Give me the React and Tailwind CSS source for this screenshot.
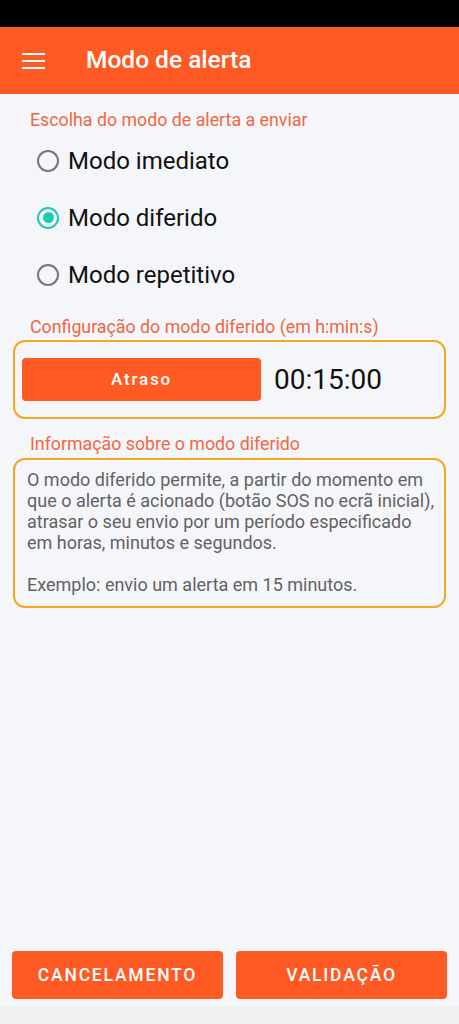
import { useState } from 'react';

const modes = ['Modo imediato', 'Modo diferido', 'Modo repetitivo'];

export default function App() {
  const [mode, setMode] = useState(1);

  return (
    <div className="w-[459px] h-[1024px] flex flex-col bg-[#f5f6fa] font-['Roboto',sans-serif] overflow-hidden">
      {/* status bar */}
      <div className="h-[27px] bg-black shrink-0" />

      {/* app bar */}
      <div className="h-[67px] bg-[#ff5a24] flex items-center shrink-0">
        <div className="w-[86px] pl-[22px] flex flex-col gap-[5px]">
          <span className="block w-[23px] h-[2px] bg-white" />
          <span className="block w-[23px] h-[2px] bg-white" />
          <span className="block w-[23px] h-[2px] bg-white" />
        </div>
        <h1 className="text-white text-[24.5px] font-medium">Modo de alerta</h1>
      </div>

      {/* content */}
      <div className="flex-1 flex flex-col px-[13px]">
        <p className="mt-[16px] pl-[17px] text-[17.8px] leading-[20px] text-[#ef6842]">
          Escolha do modo de alerta a enviar
        </p>

        <div className="flex flex-col mt-[2px]">
          {modes.map((m, i) => (
            <button
              key={m}
              onClick={() => setMode(i)}
              className="h-[57px] flex items-center pl-[24px] gap-[9px] text-left"
            >
              <span
                className={`w-[22px] h-[22px] rounded-full border-2 flex items-center justify-center ${
                  mode === i ? 'border-[#1ccbb6]' : 'border-[#767676]'
                }`}
              >
                {mode === i && <span className="w-[11px] h-[11px] rounded-full bg-[#1ccbb6]" />}
              </span>
              <span className="text-[24px] text-[#111]">{m}</span>
            </button>
          ))}
        </div>

        <p className="mt-[14px] pl-[17px] text-[17.8px] leading-[20px] text-[#ef6842]">
          Configuração do modo diferido (em h:min:s)
        </p>
        <div className="mt-[3px] h-[79px] border-2 border-[#f5a623] rounded-[12px] flex items-center px-[7px] gap-[13px]">
          <button className="w-[239px] h-[43px] bg-[#ff5a24] rounded-[4px] text-white text-[17px] font-medium tracking-[1.8px]">
            Atraso
          </button>
          <span className="text-[28px] text-[#111]">00:15:00</span>
        </div>

        <p className="mt-[14px] pl-[17px] text-[17.8px] leading-[22px] text-[#ef6842]">
          Informação sobre o modo diferido
        </p>
        <div className="mt-[3px] border-2 border-[#f5a623] rounded-[12px] pl-[12px] pr-[4px] pt-[9px] pb-[11px] text-[18px] leading-[21px] text-[#626262]">
          <p>
            O modo diferido permite, a partir do momento em que o alerta é acionado (botão SOS no ecrã inicial), atrasar o seu envio por um período especificado em horas, minutos e segundos.
          </p>
          <p className="mt-[21px]">Exemplo: envio um alerta em 15 minutos.</p>
        </div>

        <div className="mt-auto mb-[7px] flex gap-[13px] -mx-[1px]">
          <button className="flex-1 h-[48px] bg-[#ff5a24] rounded-[4px] text-white text-[17.5px] font-medium tracking-[1.8px]">
            CANCELAMENTO
          </button>
          <button className="flex-1 h-[48px] bg-[#ff5a24] rounded-[4px] text-white text-[17.5px] font-medium tracking-[1.8px]">
            VALIDAÇÃO
          </button>
        </div>
      </div>

      {/* nav bar */}
      <div className="h-[18px] bg-[#f0f0f2] shrink-0" />
    </div>
  );
}
